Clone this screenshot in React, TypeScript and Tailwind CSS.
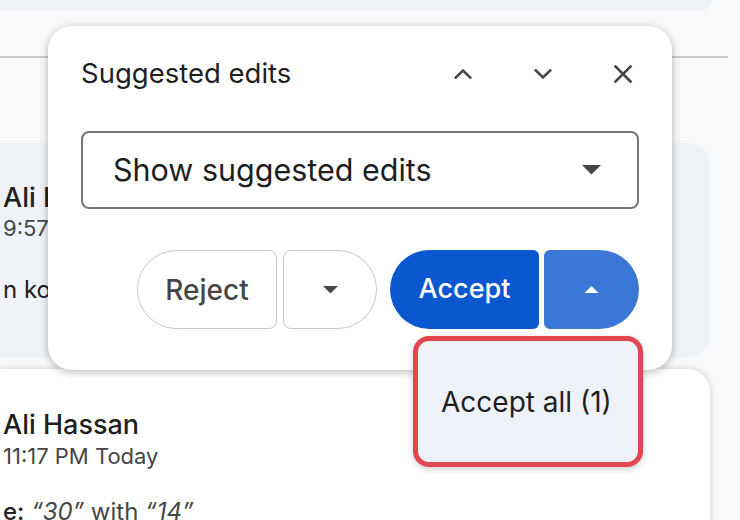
import React from "react";

const font = { fontFamily: "Inter, Roboto, sans-serif" };

function ChevronUp() {
  return (
    <svg width="18" height="10" viewBox="0 0 18 10" fill="none">
      <path d="M1.8 8.5 L9 1.6 L16.2 8.5" stroke="#444746" strokeWidth="2.6" strokeLinecap="square" />
    </svg>
  );
}
function ChevronDown() {
  return (
    <svg width="18" height="10" viewBox="0 0 18 10" fill="none">
      <path d="M1.8 1.5 L9 8.4 L16.2 1.5" stroke="#444746" strokeWidth="2.6" strokeLinecap="square" />
    </svg>
  );
}
function CloseX() {
  return (
    <svg width="20" height="20" viewBox="0 0 20 20" fill="none">
      <path d="M2.5 2.5 L17.5 17.5 M17.5 2.5 L2.5 17.5" stroke="#444746" strokeWidth="2.6" strokeLinecap="square" />
    </svg>
  );
}
function TriDown({ w = 18, color = "#444746" }: { w?: number; color?: string }) {
  return (
    <svg width={w} height={w / 2} viewBox="0 0 20 10">
      <path d="M0 0 L20 0 L10 10 Z" fill={color} />
    </svg>
  );
}
function TriUp({ w = 14, color = "#ffffff" }: { w?: number; color?: string }) {
  return (
    <svg width={w} height={w / 2} viewBox="0 0 20 10">
      <path d="M0 10 L20 10 L10 0 Z" fill={color} />
    </svg>
  );
}

export default function App() {
  return (
    <div className="relative w-[740px] h-[520px] overflow-hidden bg-[#f8f9fb]" style={font}>
      {/* background flow */}
      <div className="flex flex-col">
        <div className="h-[10px] w-[712px] bg-[#eef1f5] rounded-br-[14px]" />
        <div className="h-[46px]" />
        <div className="h-[2px] w-[728px] bg-[#c9cbce]" />
        <div className="h-[85px]" />
        <div className="h-[214px] w-[710px] bg-[#eff2f6] rounded-r-[22px] pl-[3px] pt-[40px] flex flex-col">
          <div className="text-[27px] leading-[30px] font-medium text-[#1f1f1f]">Ali Hassan</div>
          <div className="text-[22px] leading-[30px] text-[#444746]">9:57 PM Today</div>
          <div className="mt-[32px] text-[24px] leading-[30px] text-[#1f1f1f]">n korean</div>
        </div>
        <div className="h-[12px]" />
        <div className="h-[200px] w-[710px] bg-white rounded-tr-[22px] shadow-[0_0_6px_rgba(0,0,0,0.18)] pl-[3px] pt-[40px] flex flex-col">
          <div className="text-[27px] leading-[32px] font-medium text-[#1f1f1f]">Ali Hassan</div>
          <div className="text-[22px] leading-[30px] text-[#444746]">11:17 PM Today</div>
          <div className="mt-[26px] text-[24px] leading-[30px] text-[#1f1f1f]">
            <span className="font-medium">e:</span> <i className="text-[#444746]">“30”</i> <span className="text-[#444746]">with</span> <i className="text-[#444746]">“14”</i>
          </div>
        </div>
      </div>

      {/* popup */}
      <div className="absolute left-[48px] top-[26px] w-[624px] h-[344px] bg-white rounded-[24px] shadow-[0_2px_8px_rgba(0,0,0,0.28)] px-[33px] pt-[24px] flex flex-col">
        <div className="h-[48px] flex items-center">
          <div className="flex-1 text-[27.5px] text-[#1f1f1f]">Suggested edits</div>
          <div className="flex items-center gap-[48px]">
            <div className="w-[32px] h-[32px] flex items-center justify-center"><ChevronUp /></div>
            <div className="w-[32px] h-[32px] flex items-center justify-center"><ChevronDown /></div>
            <div className="w-[32px] h-[32px] flex items-center justify-center"><CloseX /></div>
          </div>
        </div>
        <div className="mt-[33px] h-[78px] border-2 border-[#747775] rounded-[8px] flex items-center pl-[30px] pr-[36px]">
          <div className="flex-1 text-[30.5px] text-[#1f1f1f]">Show suggested edits</div>
          <TriDown w={19} />
        </div>
        <div className="mt-[41px] flex justify-end items-center">
          <div className="h-[79px] w-[140px] border-[1.5px] border-[#c4c7c5] rounded-l-[40px] rounded-r-[8px] flex items-center justify-center text-[28px] font-medium text-[#444746]">Reject</div>
          <div className="ml-[6px] h-[79px] w-[94px] border-[1.5px] border-[#c4c7c5] rounded-r-[40px] rounded-l-[8px] flex items-center justify-center">
            <TriDown w={15} color="#444746" />
          </div>
          <div className="ml-[13px] h-[79px] w-[149px] bg-[#0b57d0] rounded-l-[40px] rounded-r-[6px] flex items-center justify-center text-[27px] font-medium text-white">Accept</div>
          <div className="ml-[5px] h-[79px] w-[95px] bg-[#3a77d7] rounded-r-[40px] rounded-l-[6px] flex items-center justify-center">
            <TriUp w={15} />
          </div>
        </div>
      </div>

      {/* menu */}
      <div className="absolute left-[413px] top-[336px] w-[230px] h-[131px] bg-[#eef1f8] border-[5px] border-[#e2474f] rounded-[16px] shadow-[0_2px_6px_rgba(0,0,0,0.2)] flex items-center pl-[23px]">
        <div className="text-[28px] text-[#1f1f1f]">Accept all (1)</div>
      </div>
    </div>
  );
}
